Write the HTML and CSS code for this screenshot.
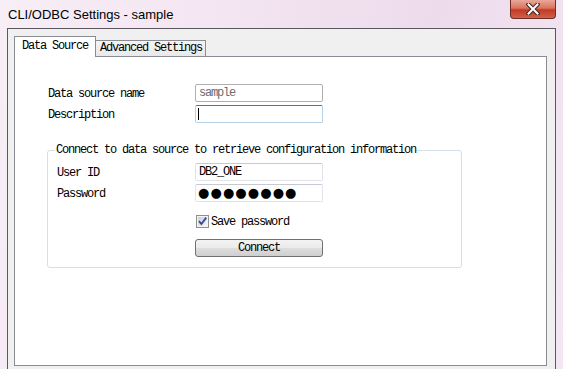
FILE: index.html
```html
<!DOCTYPE html>
<html lang="en">
<head>
    <meta charset="UTF-8">
    <title>CLI/ODBC Settings - sample</title>
    <link rel="stylesheet" href="styles.css">
</head>
<body>
    <div class="window">
        <div class="titlebar">
            <span class="title">CLI/ODBC Settings - sample</span>
            <div class="close-button">
                <svg width="14" height="12" viewBox="0 0 14 12">
                    <path d="M2.5 1.5 L11.5 10.5 M11.5 1.5 L2.5 10.5" stroke="#4a2a25" stroke-width="4.2" stroke-linecap="square"/>
                    <path d="M2.5 1.5 L11.5 10.5 M11.5 1.5 L2.5 10.5" stroke="#ffffff" stroke-width="2" stroke-linecap="square"/>
                </svg>
            </div>
        </div>

        <div class="client">
            <div class="tabs">
                <div class="tab active">Data Source</div>
                <div class="tab">Advanced Settings</div>
            </div>

            <div class="tab-page">
                <div class="form-row">
                    <span class="label">Data source name</span>
                    <div class="field disabled">sample</div>
                </div>
                <div class="form-row">
                    <span class="label">Description</span>
                    <div class="field focused"><span class="caret"></span></div>
                </div>

                <div class="group">
                    <span class="legend">Connect to data source to retrieve configuration information</span>
                    <div class="form-row">
                        <span class="label narrow">User ID</span>
                        <div class="field">DB2_ONE</div>
                    </div>
                    <div class="form-row">
                        <span class="label narrow">Password</span>
                        <div class="field password">●●●●●●●●</div>
                    </div>
                    <div class="check-row">
                        <svg class="checkbox" width="13" height="13" viewBox="0 0 13 13">
                            <defs>
                                <linearGradient id="boxFill" x1="0" y1="0" x2="1" y2="1">
                                    <stop offset="0" stop-color="#cbcfd5"/>
                                    <stop offset="1" stop-color="#f6f6f6"/>
                                </linearGradient>
                            </defs>
                            <rect x="0.5" y="0.5" width="12" height="12" fill="#f4f4f4" stroke="#8e8f8f"/>
                            <rect x="2" y="2" width="9" height="9" fill="url(#boxFill)"/>
                            <path d="M3 6.2 L5.4 9 L10.2 2.6" fill="none" stroke="#2a4d96" stroke-width="1.8"/>
                        </svg>
                        <span class="check-label">Save password</span>
                    </div>
                    <div class="button-row">
                        <div class="push-button">Connect</div>
                    </div>
                </div>
            </div>
        </div>
    </div>
</body>
</html>
```

FILE: styles.css
```css
body {
    margin: 0;
    font-family: "Liberation Mono", monospace;
    font-size: 12px;
    color: #000;
}
.window {
    width: 563px;
    height: 369px;
    overflow: hidden;
    background: linear-gradient(100deg, #f7eef6 0%, #f3e4f1 40%, #eddbeb 70%, #f4e6f2 100%);
}
.titlebar {
    height: 28px;
    display: flex;
    justify-content: space-between;
    align-items: flex-start;
}
.title {
    font-family: "Liberation Sans", Arial, sans-serif;
    font-size: 13px;
    padding: 6px 0 0 8px;
    line-height: 17px;
}
.close-button {
    width: 46px;
    height: 19px;
    margin-right: 7px;
    box-sizing: border-box;
    border: 1px solid #6e2d25;
    border-top: none;
    border-radius: 0 0 4px 4px;
    background: linear-gradient(to bottom, #e9a899 0%, #d9745f 45%, #c13b23 55%, #d2604a 100%);
    display: flex;
    align-items: center;
    justify-content: center;
}
.client {
    height: 341px;
    margin: 0 7px;
    box-sizing: border-box;
    border: 1px solid #5b5660;
    border-bottom: none;
    background: #f0f0f0;
    padding: 7px 8px 0 6px;
}
.tabs {
    height: 20px;
    display: flex;
    align-items: flex-end;
}
.tab {
    height: 16px;
    box-sizing: border-box;
    width: 110px;
    padding-left: 4px;
    border-top: 1px solid #898c95;
    border-right: 1px solid #898c95;
    background: linear-gradient(to bottom, #f4f4f4, #e9e9e9);
    line-height: 15px;
    letter-spacing: -1.2px;
    white-space: nowrap;
}
.tab.active {
    height: 21px;
    width: 82px;
    margin-bottom: -1px;
    padding-left: 7px;
    border: 1px solid #898c95;
    border-bottom: none;
    background: #fff;
    line-height: 19px;
    position: relative;
    z-index: 1;
}
.tab-page {
    height: 310px;
    box-sizing: border-box;
    border: 1px solid #898c95;
    background: #fff;
    padding: 27px 0 0 32px;
}
.form-row {
    display: flex;
    align-items: center;
    height: 18px;
    padding-left: 1px;
}
.form-row + .form-row {
    margin-top: 3px;
}
.label {
    width: 147px;
    letter-spacing: -1.2px;
    white-space: nowrap;
    padding-top: 1px;
}
.label.narrow {
    width: 138px;
}
.field {
    width: 128px;
    height: 18px;
    box-sizing: border-box;
    border: 1px solid #e2e3ea;
    border-top-color: #c9cacf;
    border-radius: 2px;
    padding-left: 3px;
    line-height: 17px;
    letter-spacing: -1.2px;
    white-space: nowrap;
    overflow: hidden;
}
.field.disabled {
    border-color: #afafaf;
    color: #6d6d6d;
}
.field.focused {
    border-color: #b5d1e8;
    border-top-color: #3d7bad;
    display: flex;
    align-items: center;
    padding-left: 2px;
}
.caret {
    width: 1px;
    height: 12px;
    background: #000;
}
.field.password {
    font-family: "DejaVu Sans", sans-serif;
    font-size: 13px;
    letter-spacing: 1.1px;
    line-height: 16px;
    padding-left: 2px;
}
.group {
    width: 415px;
    height: 118px;
    box-sizing: border-box;
    margin-top: 27px;
    border: 1px solid #d5dfe5;
    border-radius: 3px;
    padding-left: 9px;
    display: flex;
    flex-direction: column;
}
.legend {
    align-self: flex-start;
    margin: -7px 0 6px -2px;
    padding: 0 1px;
    line-height: 13px;
    background: #fff;
    letter-spacing: -1.2px;
    white-space: nowrap;
}
.group .form-row {
    padding-left: 0;
}
.check-row {
    display: flex;
    align-items: center;
    height: 13px;
    margin-top: 13px;
    padding-left: 139px;
}
.check-label {
    margin-left: 2px;
    letter-spacing: -1.2px;
    white-space: nowrap;
    padding-top: 1px;
}
.button-row {
    margin-top: 11px;
    padding-left: 138px;
}
.push-button {
    width: 128px;
    height: 18px;
    box-sizing: border-box;
    border: 1px solid #707070;
    border-radius: 3px;
    background: linear-gradient(to bottom, #f3f3f3 0%, #ebebeb 48%, #dddddd 52%, #cfcfcf 100%);
    text-align: center;
    line-height: 17px;
    letter-spacing: -1.2px;
}
```
